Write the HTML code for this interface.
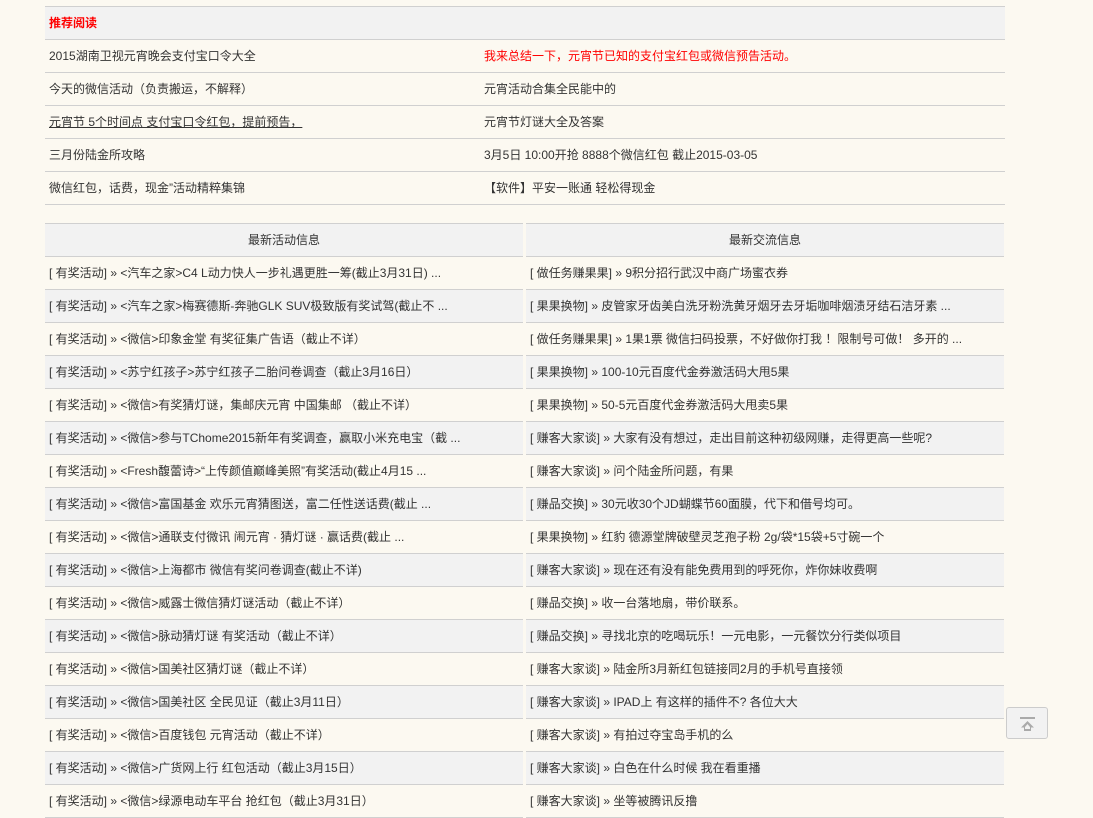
<!DOCTYPE html>
<html><head><meta charset="utf-8"><style>
body{margin:0;background:#fcf9f1;font-family:"Liberation Sans","WenQuanYi Zen Hei","Noto Sans CJK SC",sans-serif;font-size:12px;color:#333;width:1093px;height:816px;overflow:hidden;position:relative}
.r{position:absolute;height:32px;line-height:32px;border-bottom:1px solid #d0d0d0;white-space:nowrap;overflow:hidden}
.g{background:#f2f2f2}
.t{position:absolute;white-space:nowrap}
</style></head><body>
<div style="position:absolute;left:45px;top:6px;width:956px;height:32px;border-top:1px solid #d0d0d0;border-bottom:1px solid #d0d0d0;background:#f2f2f2;line-height:32px;color:#f00;font-weight:bold;padding-left:4px">推荐阅读</div>
<div class="r" style="left:45px;top:40px;width:960px"><span class="t" style="left:4px">2015湖南卫视元宵晚会支付宝口令大全</span><span class="t" style="left:439px;color:#f00">我来总结一下，元宵节已知的支付宝红包或微信预告活动。</span></div>
<div class="r" style="left:45px;top:73px;width:960px"><span class="t" style="left:4px">今天的微信活动（负责搬运，不解释）</span><span class="t" style="left:439px">元宵活动合集全民能中的</span></div>
<div class="r" style="left:45px;top:106px;width:960px"><span class="t" style="left:4px;text-decoration:underline">元宵节 5个时间点 支付宝口令红包，提前预告，</span><span class="t" style="left:439px">元宵节灯谜大全及答案</span></div>
<div class="r" style="left:45px;top:139px;width:960px"><span class="t" style="left:4px">三月份陆金所攻略</span><span class="t" style="left:439px">3月5日 10:00开抢 8888个微信红包 截止2015-03-05</span></div>
<div class="r" style="left:45px;top:172px;width:960px"><span class="t" style="left:4px">微信红包，话费，现金”活动精粹集锦</span><span class="t" style="left:439px">【软件】平安一账通 轻松得现金</span></div>

<div id="L"></div>
<div style="position:absolute;left:1006px;top:707px;width:40px;height:30px;border:1px solid #ccc;border-radius:3px;background:#f2f2f2">
<svg width="40" height="30" viewBox="0 0 40 30"><rect x="13" y="9" width="15" height="2" fill="#aaa"/><path d="M20.5 13 L14 19.5 H17 V23 H24 V19.5 H27 Z M20.5 16 L23 19 V21 H18 V19 Z" fill="#aaa" fill-rule="evenodd"/></svg></div>
<script>
var L=["<汽车之家>C4 L动力快人一步礼遇更胜一筹(截止3月31日) ...","<汽车之家>梅赛德斯-奔驰GLK SUV极致版有奖试驾(截止不 ...","<微信>印象金堂 有奖征集广告语（截止不详）","<苏宁红孩子>苏宁红孩子二胎问卷调查（截止3月16日）","<微信>有奖猜灯谜，集邮庆元宵 中国集邮 （截止不详）","<微信>参与TChome2015新年有奖调查，赢取小米充电宝（截 ...","<Fresh馥蕾诗>“上传颜值巅峰美照”有奖活动(截止4月15 ...","<微信>富国基金 欢乐元宵猜图送，富二任性送话费(截止 ...","<微信>通联支付微讯 闹元宵 · 猜灯谜 · 赢话费(截止 ...","<微信>上海都市 微信有奖问卷调查(截止不详)","<微信>威露士微信猜灯谜活动（截止不详）","<微信>脉动猜灯谜 有奖活动（截止不详）","<微信>国美社区猜灯谜（截止不详）","<微信>国美社区 全民见证（截止3月11日）","<微信>百度钱包 元宵活动（截止不详）","<微信>广货网上行 红包活动（截止3月15日）","<微信>绿源电动车平台 抢红包（截止3月31日）"];
var R=[["做任务赚果果","9积分招行武汉中商广场蜜衣券"],["果果换物","皮管家牙齿美白洗牙粉洗黄牙烟牙去牙垢咖啡烟渍牙结石洁牙素 ..."],["做任务赚果果","1果1票 微信扫码投票，不好做你打我 ！限制号可做！ 多开的 ..."],["果果换物","100-10元百度代金券激活码大甩5果"],["果果换物","50-5元百度代金券激活码大甩卖5果"],["赚客大家谈","大家有没有想过，走出目前这种初级网赚，走得更高一些呢?"],["赚客大家谈","问个陆金所问题，有果"],["赚品交换","30元收30个JD蝴蝶节60面膜，代下和借号均可。"],["果果换物","红豹 德源堂牌破壁灵芝孢子粉 2g/袋*15袋+5寸碗一个"],["赚客大家谈","现在还有没有能免费用到的呼死你，炸你妹收费啊"],["赚品交换","收一台落地扇，带价联系。"],["赚品交换","寻找北京的吃喝玩乐！一元电影，一元餐饮分行类似项目"],["赚客大家谈","陆金所3月新红包链接同2月的手机号直接领"],["赚客大家谈","IPAD上 有这样的插件不? 各位大大"],["赚客大家谈","有拍过夺宝岛手机的么"],["赚客大家谈","白色在什么时候 我在看重播"],["赚客大家谈","坐等被腾讯反撸"]];
var h='';
function esc(s){return s.replace(/</g,'&lt;').replace(/>/g,'&gt;')}
h+='<div class="r g" style="left:45px;top:223px;width:478px;border-top:1px solid #d0d0d0;text-align:center">最新活动信息</div>';
h+='<div class="r g" style="left:526px;top:223px;width:478px;border-top:1px solid #d0d0d0;text-align:center">最新交流信息</div>';
for(var i=0;i<17;i++){var y=257+i*33,c=(i%2)?' g':'';
h+='<div class="r'+c+'" style="left:45px;top:'+y+'px;width:478px"><span class="t" style="left:4px">[ 有奖活动] » '+esc(L[i])+'</span></div>';
h+='<div class="r'+c+'" style="left:526px;top:'+y+'px;width:478px"><span class="t" style="left:4px">[ '+R[i][0]+'] » '+esc(R[i][1])+'</span></div>';}
document.getElementById('L').innerHTML=h;
</script>
</body></html>
